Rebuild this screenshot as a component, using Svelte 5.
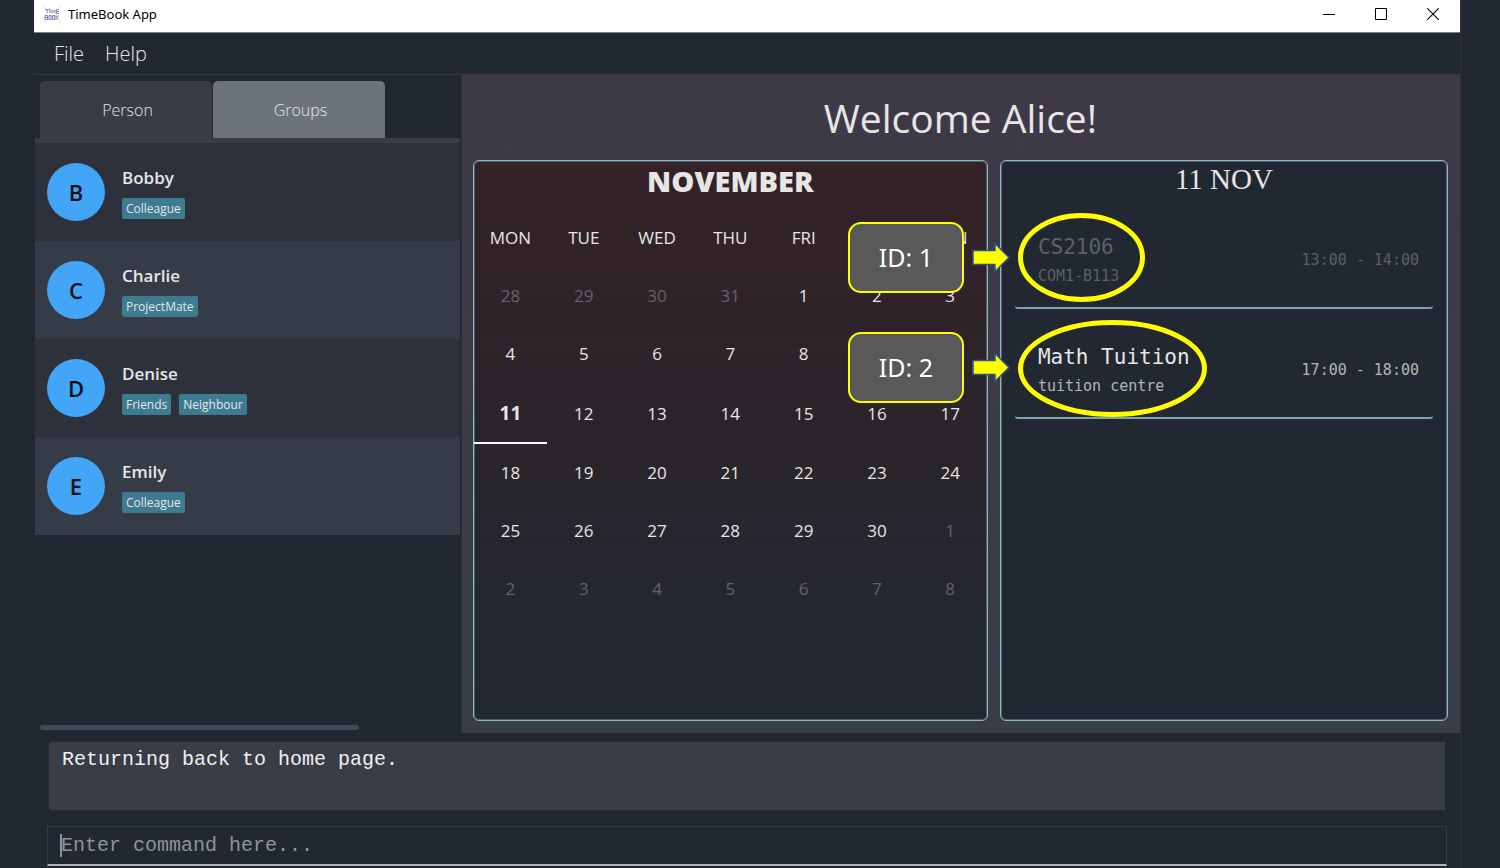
<script>
  const people = [
    { name: 'Bobby', tags: ['Colleague'] },
    { name: 'Charlie', tags: ['ProjectMate'] },
    { name: 'Denise', tags: ['Friends', 'Neighbour'] },
    { name: 'Emily', tags: ['Colleague'] }
  ];

  const weekdays = ['MON', 'TUE', 'WED', 'THU', 'FRI', 'SAT', 'SUN'];

  // Six weeks starting on 28 October; November has 30 days.
  const days = Array.from({ length: 42 }, (_, i) => {
    const n = i - 3;
    if (n < 1) return { label: n + 31, outside: true };
    if (n > 30) return { label: n - 30, outside: true };
    return { label: n, outside: false, today: n === 11 };
  });
  const weeks = Array.from({ length: 6 }, (_, w) => days.slice(w * 7, w * 7 + 7));

  const events = [
    { id: 1, title: 'CS2106', place: 'COM1-B113', time: '13:00 - 14:00', past: true, rx: 61, ry: 42 },
    { id: 2, title: 'Math Tuition', place: 'tuition centre', time: '17:00 - 18:00', past: false, rx: 92, ry: 46 }
  ];

  let tab = $state('Person');
  let command = $state('');
</script>

<div class="app">
  <header class="titlebar">
    <svg class="logo" viewBox="0 0 18 18" width="18" height="18" aria-hidden="true">
      <path d="M1 3V1h2M15 1h2v2M1 15v2h2M15 17h2v-2" fill="none" stroke="#dcdce6" />
      <path d="M2 4.5h4M4 4.5v4M7 4v4.500M9 8.500V5l1.500 2L12 5v3.500M16 4.500h-2.500v4H16M13.500 6.500H16" fill="none" stroke="#8a86b8" />
      <path d="M6 3l3 3M7 8l3-3" stroke="#e4b9a4" fill="none" />
      <path d="M2 10.500v4h2.500v-4zM2 12.500h2.500M6 10.500h2v4H6zM9.500 10.500h2v4h-2zM13 10v5M16 10.500l-2.500 2 2.500 2" fill="none" stroke="#7f80bb" />
    </svg>
    <span class="title">TimeBook App</span>
    <div class="controls">
      <button aria-label="Minimize"><svg width="12" height="12" viewBox="0 0 12 12"><path d="M0 6.500h12" stroke="#000" /></svg></button>
      <button aria-label="Maximize"><svg width="12" height="12" viewBox="0 0 12 12"><path d="M.5.5h11v11H.5z" fill="none" stroke="#000" /></svg></button>
      <button aria-label="Close"><svg width="12" height="12" viewBox="0 0 12 12"><path d="M.3.3l11.400 11.400M11.700.3L.3 11.700" stroke="#000" stroke-width="1.100" /></svg></button>
    </div>
  </header>

  <nav class="menu">
    <button>File</button>
    <button>Help</button>
  </nav>

  <main>
    <aside>
      <div class="tabs" role="tablist">
        {#each ['Person', 'Groups'] as name}
          <button role="tab" aria-selected={tab === name} class:active={tab === name} onclick={() => (tab = name)}>{name}</button>
        {/each}
      </div>
      <ul class="people">
        {#each people as person}
          <li>
            <span class="avatar">{person.name[0]}</span>
            <div>
              <div class="name">{person.name}</div>
              <div class="tags">
                {#each person.tags as tag}<span>{tag}</span>{/each}
              </div>
            </div>
          </li>
        {/each}
      </ul>
      <div class="scrollbar"></div>
    </aside>

    <section class="home">
      <h1>Welcome Alice!</h1>
      <div class="panels">
        <section class="calendar">
          <h2>NOVEMBER</h2>
          <table>
            <thead>
              <tr>{#each weekdays as day}<th>{day}</th>{/each}</tr>
            </thead>
            <tbody>
              {#each weeks as week}
                <tr class:current={week.some((d) => d.today)}>
                  {#each week as day}
                    <td class:outside={day.outside} class:today={day.today}>{day.label}</td>
                  {/each}
                </tr>
              {/each}
            </tbody>
          </table>
        </section>

        <section class="agenda">
          <h2>11 NOV</h2>
          <ul>
            {#each events as event}
              <li class:past={event.past}>
                <div>
                  <div class="what">{event.title}</div>
                  <div class="where">{event.place}</div>
                </div>
                <time>{event.time}</time>
                <svg class="ring" width={event.rx * 2 + 5} height={event.ry * 2 + 5} aria-hidden="true">
                  <ellipse cx="50%" cy="50%" rx={event.rx} ry={event.ry} />
                </svg>
                <div class="callout">
                  <span>ID: {event.id}</span>
                  <svg width="38" height="32" viewBox="0 0 38 32" aria-hidden="true">
                    <path d="M1 8.500h22V1.500l14 14-14 14v-7H1z" fill="#ff0" stroke="#2f528f" stroke-width="1.500" />
                  </svg>
                </div>
              </li>
            {/each}
          </ul>
        </section>
      </div>
    </section>
  </main>

  <output class="result">Returning back to home page.</output>

  <div class="command">
    <input type="text" aria-label="Command" placeholder="Enter command here..." bind:value={command} />
    <span class="caret"></span>
  </div>
</div>

<style>
  :global(body) {
    margin: 0;
    background: #222831;
  }
  .app {
    box-sizing: border-box;
    min-height: 100vh;
    margin: 0 39px 0 34px;
    border-right: 1px solid #33342f;
    display: flex;
    flex-direction: column;
    font-family: 'Open Sans', 'Noto Sans', sans-serif;
    color: #e6e6e6;
  }
  button {
    border: 0;
    padding: 0;
    background: none;
    font: inherit;
    color: inherit;
  }
  ul {
    list-style: none;
    margin: 0;
    padding: 0;
  }
  h1, h2 {
    margin: 0;
    text-align: center;
  }

  .titlebar {
    display: flex;
    align-items: center;
    height: 33px;
    padding: 0 1px 4px 9px;
    background: #fff;
    color: #000;
    border-bottom: 1px solid #7a7d82;
    box-sizing: border-box;
  }
  .title {
    margin-left: 7px;
    font-size: 13px;
    line-height: 28px;
    font-family: 'Noto Sans', sans-serif;
  }
  .titlebar svg {
    display: block;
  }
  .controls {
    display: flex;
    margin-left: auto;
  }
  .controls button {
    width: 52px;
    height: 28px;
    display: grid;
    place-items: center;
  }

  .menu {
    display: flex;
    gap: 21px;
    padding: 0 20px;
    border-bottom: 1px solid #363a43;
    font-weight: 300;
    font-size: 20px;
    line-height: 41px;
  }

  main {
    display: flex;
    flex: 1;
  }
  aside {
    box-sizing: border-box;
    width: 30%;
    flex: none;
    display: flex;
    flex-direction: column;
    padding: 6px 1px 0;
    border-right: 1px solid #2a2f39;
  }
  .tabs {
    display: flex;
    gap: 1px;
    padding-left: 5px;
    border-bottom: 5px solid #393c44;
  }
  .tabs button {
    width: 172px;
    height: 57px;
    border-radius: 5px 5px 0 0;
    background: #6d737d;
    font-weight: 300;
    font-size: 16px;
    line-height: 24px;
    padding-left: 3px;
  }
  .tabs button.active {
    background: #393c44;
  }
  .people li {
    display: flex;
    align-items: center;
    gap: 17px;
    height: 98px;
    padding-left: 12px;
    background: #2c313c;
  }
  .people li:nth-child(even) {
    background: #363c47;
  }
  .avatar {
    width: 58px;
    height: 58px;
    border-radius: 50%;
    background: #42a5f5;
    color: #0c1016;
    display: grid;
    place-items: center;
    font-weight: 600;
    font-size: 22px;
  }
  .name {
    font-weight: 600;
    font-size: 17px;
    line-height: 24px;
    margin-bottom: 8px;
  }
  .tags {
    display: flex;
    gap: 8px;
  }
  .tags span {
    padding: 0 4px;
    border-radius: 2px;
    background: #3e7b91;
    font-weight: 500;
    font-size: 12px;
    line-height: 21px;
  }
  .scrollbar {
    width: 75%;
    height: 5px;
    margin: auto 0 3px 5px;
    border-radius: 3px;
    background: #414955;
  }

  .home {
    flex: 1;
    display: flex;
    flex-direction: column;
    padding: 0 12px 12px 11px;
    background: linear-gradient(#3e3946, #393d46);
  }
  h1 {
    font-weight: 400;
    font-size: 39px;
    line-height: 85px;
  }
  .panels {
    flex: 1;
    display: grid;
    grid-template-columns: minmax(0, 515fr) minmax(0, 448fr);
    gap: 12px;
  }
  .calendar, .agenda {
    box-sizing: border-box;
    border: 1px solid #8db5c2;
    border-radius: 6px;
    box-shadow: inset 0 0 0 1px #4b626e;
  }
  .calendar {
    background: linear-gradient(#342227, #2e2329 30%, #28252b 58%, #27262f 68%, #242830 82%, #222831);
  }
  .calendar h2 {
    font-weight: 800;
    font-size: 29px;
    line-height: 40px;
    margin-bottom: 8px;
  }
  table {
    width: 100%;
    table-layout: fixed;
    border-collapse: separate;
    border-spacing: 0;
    font-size: 17px;
    line-height: 24px;
  }
  tr {
    height: 58px;
  }
  tr.current {
    height: 61px;
  }
  th, td {
    padding: 0;
    text-align: center;
  }
  th {
    font-weight: 500;
  }
  .outside {
    color: #676268;
  }
  .today {
    font-weight: 700;
    font-size: 19px;
    border-bottom: 2px solid #fff;
  }

  .agenda {
    background: #222831;
    padding: 0 14px;
  }
  .agenda h2 {
    font-family: 'Liberation Serif', serif;
    font-weight: 400;
    font-size: 29px;
    line-height: 37px;
    margin-bottom: 1px;
  }
  .agenda li {
    position: relative;
    box-sizing: border-box;
    height: 110px;
    padding: 14px 14px 0 23px;
    display: flex;
    align-items: center;
    justify-content: space-between;
    border-bottom: 2px solid #7ea3b1;
    border-radius: 3px;
    font-family: 'DejaVu Sans Mono', monospace;
    font-size: 15px;
    color: #b4b5b8;
  }
  .what {
    font-size: 21px;
    line-height: 32px;
    color: #e6e6e6;
  }
  .where {
    line-height: 26px;
  }
  .agenda .past, .past .what {
    color: #5c6066;
  }
  .ring {
    position: absolute;
    left: 3px;
    bottom: 0;
  }
  .past .ring {
    bottom: 5px;
  }
  .ring ellipse {
    fill: none;
    stroke: #ff0;
    stroke-width: 5;
  }
  .callout {
    position: absolute;
    right: 100%;
    top: 23px;
    margin-right: 5px;
    display: flex;
    align-items: center;
    gap: 8px;
  }
  .callout span {
    box-sizing: border-box;
    width: 116px;
    border: 2px solid #ff0;
    border-radius: 13px;
    background: #595959;
    color: #fff;
    text-align: center;
    font-family: 'Noto Sans', sans-serif;
    font-size: 25px;
    line-height: 67px;
  }

  .result {
    display: block;
    box-sizing: border-box;
    height: 68px;
    margin: 9px 15px 16px;
    padding: 6px 13px;
    background: #393d46;
    font-family: 'Liberation Mono', 'Courier New', monospace;
    font-size: 20px;
    line-height: 24px;
    color: #f0f0f0;
  }
  .command {
    position: relative;
    margin: 0 13px 2px;
  }
  .command input {
    display: block;
    box-sizing: border-box;
    width: 100%;
    height: 40px;
    padding: 0 13px;
    border: 1px solid #363a43;
    border-bottom: 2px solid #b4b5b8;
    outline: 0;
    background: transparent;
    color: #f0f0f0;
    font-family: 'Liberation Mono', 'Courier New', monospace;
    font-size: 20px;
  }
  .command input::placeholder {
    color: #909397;
    opacity: 1;
  }
  .caret {
    position: absolute;
    left: 13px;
    top: 8px;
    width: 2px;
    height: 23px;
    background: #909397;
  }
</style>
